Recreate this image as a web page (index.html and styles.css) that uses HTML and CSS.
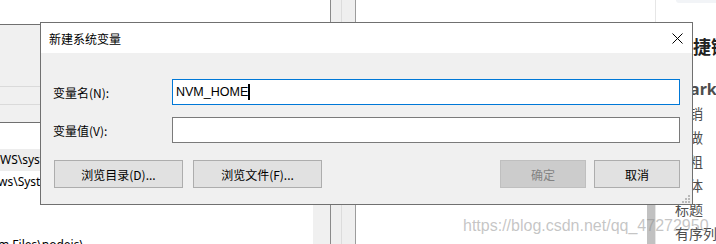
FILE: index.html
```html
<!DOCTYPE html>
<html lang="zh-CN">
<head>
<meta charset="utf-8">
<title>新建系统变量</title>
<link rel="stylesheet" href="styles.css">
</head>
<body>
<div class="screen">
  <div class="left-win">
    <div class="top-white"></div>
    <div class="env-box">
      <div class="env-row r1"></div>
      <div class="env-row r2"></div>
      <div class="env-row r3"></div>
    </div>
    <div class="path-list">
      <div class="paths">
        <div class="path sel">WS\system32</div>
        <div class="path"><span class="cut">ws\System32\Wbem</span></div>
        <div class="path last"><span class="cut">m Files\nodejs\</span></div>
      </div>
      <div class="side-strip"></div>
    </div>
  </div>
  <div class="vscroll"><div class="track-a"></div><div class="track-b"></div></div>
  <div class="editor">
    <div class="editor-main"><div class="thumb"></div></div>
    <div class="help">
      <div class="help-top"></div>
      <div class="help-title">快捷键</div>
      <div class="help-sub">Markdown</div>
      <ul class="help-list">
        <li>撤销</li>
        <li>重做</li>
        <li>加粗</li>
        <li>斜体</li>
        <li>标题</li>
        <li>有序列表</li>
      </ul>
    </div>
  </div>
</div>

<div class="dialog">
  <div class="titlebar">
    <span class="title">新建系统变量</span>
    <svg class="close" width="11" height="11" viewBox="0 0 11 11"><path d="M0.5 0.5 L10.5 10.5 M10.5 0.5 L0.5 10.5" stroke="#000" stroke-width="1" fill="none"/></svg>
  </div>
  <div class="body">
    <div class="fields">
      <label class="lbl">变量名(N):</label>
      <div class="input focus"><span class="val">NVM_HOME</span><span class="caret"></span></div>
      <label class="lbl">变量值(V):</label>
      <div class="input"></div>
    </div>
    <div class="buttons">
      <div class="btn wide">浏览目录(D)...</div>
      <div class="btn wide">浏览文件(F)...</div>
      <div class="spacer"></div>
      <div class="btn small disabled">确定</div>
      <div class="btn small">取消</div>
    </div>
  </div>
  <svg class="grip" width="9" height="9" viewBox="0 0 9 9">
    <rect x="6" y="0" width="2" height="2" fill="#b9b9b9"/>
    <rect x="3" y="3" width="2" height="2" fill="#b9b9b9"/>
    <rect x="6" y="3" width="2" height="2" fill="#b9b9b9"/>
    <rect x="0" y="6" width="2" height="2" fill="#b9b9b9"/>
    <rect x="3" y="6" width="2" height="2" fill="#b9b9b9"/>
    <rect x="6" y="6" width="2" height="2" fill="#b9b9b9"/>
  </svg>
</div>

<div class="watermark">https://blog.csdn.net/qq_47272950</div>
</body>
</html>
```
FILE: styles.css
```css
* { box-sizing: border-box; }
html, body {
  margin: 0;
  padding: 0;
  width: 716px;
  height: 244px;
  overflow: hidden;
  background: #fff;
  font-family: "Noto Sans CJK SC", "Noto Sans", sans-serif;
}
.screen {
  display: flex;
  width: 716px;
  height: 244px;
}

/* left background window */
.left-win {
  flex: 0 0 330px;
  width: 330px;
  min-width: 0;
  display: flex;
  flex-direction: column;
  overflow: hidden;
}
.top-white { height: 24px; flex-shrink: 0; }
.env-box {
  height: 99px;
  flex-shrink: 0;
  border-top: 1px solid #707070;
  border-bottom: 1px solid #707070;
  background: #f0f0f0;
  display: flex;
  flex-direction: column;
}
.env-row.r1 { height: 62px; border-bottom: 1px solid #dadada; }
.env-row.r2 { height: 18px; border-bottom: 1px solid #dadada; }
.env-row.r3 { flex: 1; }
.path-list {
  flex: 1;
  display: flex;
  min-height: 0;
}
.paths {
  flex: 1;
  min-width: 0;
  padding-top: 26px;
  overflow: hidden;
}
.path {
  height: 22px;
  line-height: 22px;
  font-family: "Noto Sans", "Noto Sans CJK SC", sans-serif;
  font-size: 12px;
  color: #000;
  white-space: nowrap;
  overflow: hidden;
}
.path.sel { background: #ededed; }
.path .cut { margin-left: -2px; }
.path.last { margin-top: 41px; }
.side-strip {
  flex: 0 0 17px;
  background: #f0f0f0;
}

/* middle scrollbar */
.vscroll {
  flex: 0 0 26px;
  display: flex;
  border-left: 1px solid #8a8a8a;
  border-right: 1px solid #9c9c9c;
  background: #efefef;
}
.track-a { width: 11px; border-right: 1px solid #dcdcdc; }
.track-b { flex: 1; }

/* right editor */
.editor {
  flex: 1 1 0;
  min-width: 0;
  display: flex;
}
.editor-main {
  flex: 0 0 300px;
  border-right: 1px solid #e6e6e6;
  display: flex;
  justify-content: flex-end;
  align-items: flex-end;
}
.thumb {
  width: 8px;
  height: 110px;
  background: #c1c1c1;
}
.help {
  flex: 1 1 0;
  min-width: 0;
  padding-left: 19px;
  overflow: hidden;
  white-space: nowrap;
}
.help-top {
  height: 3px;
  margin-left: 1px;
  background: #f2f4f7;
  border-bottom-left-radius: 4px;
}
.help-title {
  margin-top: 31px;
  height: 24px;
  line-height: 24px;
  font-size: 18px;
  font-weight: bold;
  color: #222;
}
.help-sub {
  margin-top: 19px;
  height: 24px;
  line-height: 24px;
  font-family: "Noto Sans", sans-serif;
  font-size: 16px;
  font-weight: bold;
  color: #4d4d4d;
}
.help-list {
  list-style: none;
  margin: 0;
  padding: 0;
}
.help-list li {
  height: 24px;
  line-height: 24px;
  font-size: 14px;
  color: #4d4d4d;
}

/* dialog (overlay window) */
.dialog {
  position: absolute;
  left: 40px;
  top: 22px;
  width: 653px;
  height: 183px;
  border: 1px solid #707070;
  background: #f0f0f0;
  display: flex;
  flex-direction: column;
}
.titlebar {
  height: 30px;
  flex-shrink: 0;
  background: #fff;
  display: flex;
  align-items: center;
  justify-content: space-between;
  padding: 0 9px 0 8px;
}
.title {
  font-size: 12px;
  color: #000;
}
.close { display: block; }
.body {
  flex: 1;
  padding: 26px 12px 0 12px;
}
.fields {
  display: grid;
  grid-template-columns: 119px 1fr;
  grid-auto-rows: 26px;
  row-gap: 12px;
}
.lbl {
  display: flex;
  align-items: center;
  font-size: 12px;
  color: #000;
}
.input {
  background: #fff;
  border: 1px solid #7a7a7a;
  display: flex;
  align-items: center;
  padding-left: 3px;
}
.input.focus { border-color: #0078d7; }
.val {
  font-family: "Liberation Sans", Arial, sans-serif;
  font-size: 12.5px;
  color: #000;
}
.caret {
  width: 2px;
  height: 16px;
  background: #000;
}
.buttons {
  margin-top: 17px;
  display: flex;
  gap: 10px;
  padding-left: 1px;
}
.spacer { flex: 1; }
.btn {
  height: 28px;
  background: #e1e1e1;
  border: 1px solid #adadad;
  display: flex;
  align-items: center;
  justify-content: center;
  font-size: 12px;
  color: #000;
}
.btn.wide { width: 129px; }
.btn.small { width: 86px; }
.btn.small + .btn.small { margin-left: -2px; }
.btn.disabled {
  background: #cccccc;
  border-color: #bfbfbf;
  color: #838383;
}
.grip {
  position: absolute;
  right: 1px;
  bottom: 0;
}

.watermark {
  position: absolute;
  left: 463px;
  top: 215px;
  font-family: "Liberation Sans", Arial, sans-serif;
  font-size: 16px;
  line-height: 22px;
  color: rgba(140, 140, 140, 0.5);
  white-space: nowrap;
}
```
